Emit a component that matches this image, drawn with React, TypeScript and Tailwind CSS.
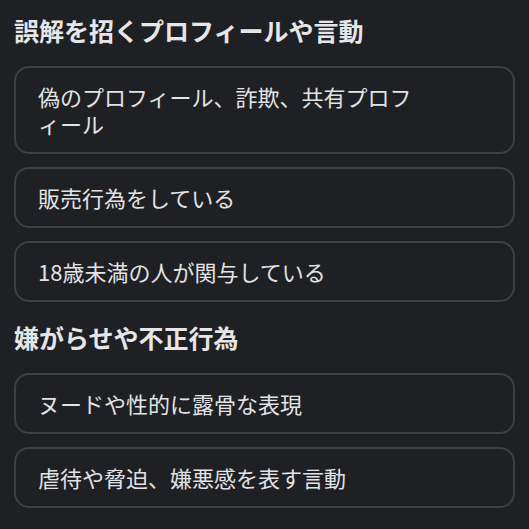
const sections = [
  {
    title: "誤解を招くプロフィールや言動",
    items: ["偽のプロフィール、詐欺、共有プロフィール", "販売行為をしている", "18歳未満の人が関与している"],
  },
  {
    title: "嫌がらせや不正行為",
    items: ["ヌードや性的に露骨な表現", "虐待や脅迫、嫌悪感を表す言動"],
  },
];

export default function App() {
  return (
    <div
      className="w-[529px] h-[529px] overflow-hidden bg-[#1f2024] px-[14px] pt-[16px]"
      style={{ fontFamily: '"Noto Sans CJK JP", "Noto Sans", sans-serif' }}
    >
      {sections.map((s, i) => (
        <div key={s.title} className={i > 0 ? "mt-[21px]" : ""}>
          <h2 className="text-[25px] leading-[28px] font-bold text-[#e6e6e8] mb-[22px]">{s.title}</h2>
          <div className="flex flex-col gap-[13px]">
            {s.items.map((item) => (
              <button
                key={item}
                className="w-full text-left border-2 border-[#3c4148] rounded-[15px] pl-[22px] pr-[20px] py-[15px] text-[22px] leading-[27px] text-[#e3e3e5]"
              >
                <span className="block max-w-[390px]">{item}</span>
              </button>
            ))}
          </div>
        </div>
      ))}
    </div>
  );
}
